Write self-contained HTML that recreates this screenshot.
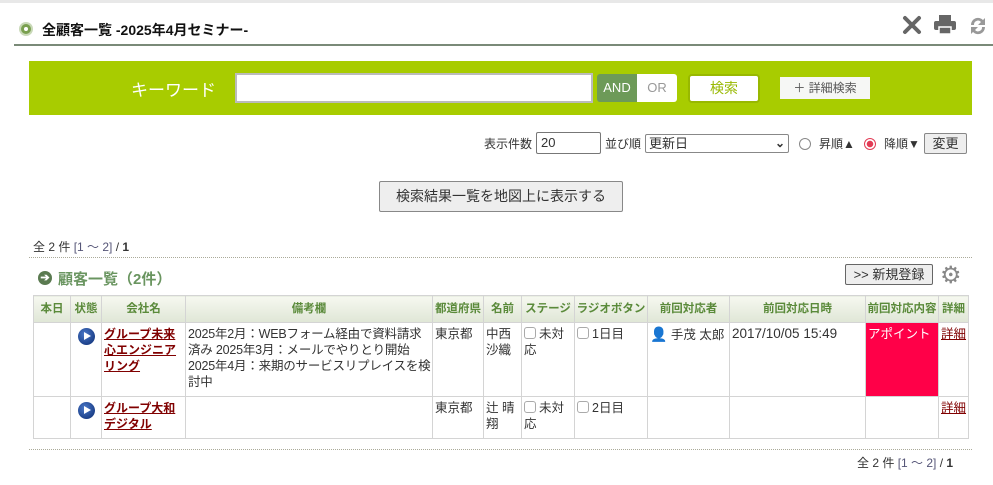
<!DOCTYPE html>
<html><head><meta charset="utf-8"><style>
*{box-sizing:border-box;margin:0;padding:0}
body{width:993px;height:485px;background:#fff;font-family:"Liberation Sans","Noto Sans CJK JP",sans-serif;font-size:12px;color:#333;position:relative;overflow:hidden}
.a{position:absolute}
table{border-collapse:collapse;position:absolute;left:33px;top:295px;width:935px;table-layout:fixed}
td,th{border:1px solid #d4d4d4;vertical-align:top;padding:3px 2px;font-size:12.5px;line-height:16px}
th{background:linear-gradient(#f6f8f0,#dfe6d6);color:#5a8a3a;font-weight:bold;text-align:center;height:27px;vertical-align:middle;padding:0 1px;white-space:nowrap;font-size:11.5px}
td a{color:#800000;font-weight:bold;text-decoration:underline}
.cb{display:inline-block;width:12px;height:12px;border:1px solid #aaa;border-radius:3px;vertical-align:-1px;margin-right:3px}
.play{display:inline-block;width:17px;height:17px;border-radius:50%;background:radial-gradient(circle at 40% 35%,#4a78c8,#0a2a70);position:relative;margin-top:2px}
.play:after{content:"";position:absolute;left:6px;top:4px;border-left:7px solid #fff;border-top:4.5px solid transparent;border-bottom:4.5px solid transparent}
</style></head><body>
<div class="a" style="left:0;top:0;width:993px;height:3px;background:#e8e8e8"></div>
<div class="a" style="left:19px;top:22px;width:14px;height:14px;border-radius:50%;background:#7aa050;border:2px solid #c9d9b8"></div>
<div class="a" style="left:24px;top:27px;width:4px;height:4px;border-radius:50%;background:#fff"></div>
<div class="a" style="left:42px;top:20px;font-size:14px;font-weight:bold;color:#111">全顧客一覧 -2025年4月セミナー-</div>
<svg class="a" style="left:902px;top:15px" width="20" height="20" viewBox="0 0 20 20"><path d="M3 3l14 14M17 3L3 17" stroke="#666" stroke-width="4" stroke-linecap="round"/></svg>
<svg class="a" style="left:934px;top:15px" width="22" height="20" viewBox="0 0 22 20"><rect x="5" y="0" width="12" height="6" fill="#666"/><rect x="0" y="6" width="22" height="9" rx="2" fill="#666"/><rect x="5" y="12" width="12" height="7" fill="#666" stroke="#fff" stroke-width="1.5"/></svg>
<svg class="a" style="left:968px;top:15px" width="20" height="22" viewBox="0 0 20 22"><path d="M3 10a7 7 0 0 1 12-5l2-2v7h-7l3-3a4 4 0 0 0-7 3z M17 12a7 7 0 0 1-12 5l-2 2v-7h7l-3 3a4 4 0 0 0 7-3z" fill="#999"/></svg>
<div class="a" style="left:14px;top:44px;width:979px;height:2px;background:#7a8a78"></div>
<div class="a" style="left:29px;top:61px;width:943px;height:54px;background:#a8cc00"></div>
<div class="a" style="left:131px;top:76px;font-size:17px;color:#fff">キーワード</div>
<div class="a" style="left:235px;top:73px;width:358px;height:30px;background:#fff;border:2px solid #bbb"></div>
<div class="a" style="left:597px;top:74px;width:40px;height:28px;background:#6d9a58;color:#fff;font-size:13px;text-align:center;line-height:28px;border-radius:3px 0 0 3px">AND</div>
<div class="a" style="left:637px;top:74px;width:40px;height:28px;background:#fff;color:#999;font-size:13px;text-align:center;line-height:28px;border-radius:0 3px 3px 0">OR</div>
<div class="a" style="left:688px;top:74px;width:72px;height:29px;background:#fff;border:2px solid #98b800;border-radius:4px;color:#98b800;font-size:14px;text-align:center;line-height:25px">検索</div>
<div class="a" style="left:780px;top:77px;width:90px;height:22px;background:#f6f7f5;color:#555;font-size:12px;text-align:center;line-height:22px">＋ 詳細検索</div>
<div class="a" style="left:484px;top:135px;font-size:12px">表示件数</div>
<div class="a" style="left:536px;top:132px;width:65px;height:22px;border:1px solid #777;border-radius:2px;padding:2px 4px;font-size:13px">20</div>
<div class="a" style="left:605px;top:135px">並び順</div>
<div class="a" style="left:645px;top:134px;width:144px;height:19px;border:1px solid #888;border-radius:2px;padding:0 3px;font-size:13px;line-height:17px">更新日<span style="float:right;font-size:12px;font-weight:bold">&#8964;</span></div>
<div class="a" style="left:799px;top:138px;width:12px;height:12px;border-radius:50%;border:1px solid #888"></div>
<div class="a" style="left:819px;top:135px">昇順▲</div>
<div class="a" style="left:864px;top:138px;width:12px;height:12px;border-radius:50%;border:1.5px solid #e23a54;background:radial-gradient(#e23a54 3px,#fff 3.5px)"></div>
<div class="a" style="left:884px;top:135px">降順▼</div>
<div class="a" style="left:924px;top:133px;width:43px;height:21px;border:1px solid #888;border-radius:2px;background:#eee;text-align:center;line-height:19px;font-size:13px">変更</div>
<div class="a" style="left:379px;top:181px;width:244px;height:31px;border:1px solid #888;border-radius:2px;background:#eee;text-align:center;line-height:29px;font-size:14px">検索結果一覧を地図上に表示する</div>
<div class="a" style="left:33px;top:238px">全 2 件 <span style="color:#557">[1 ～ 2]</span> / <b>1</b></div>
<div class="a" style="left:29px;top:257px;width:943px;border-top:1px dotted #aa9"></div>
<div class="a" style="left:38px;top:271px;width:14px;height:14px;border-radius:50%;background:#5a7a50;color:#fff;font-size:11px;line-height:14px;text-align:center;font-weight:bold">➔</div>
<div class="a" style="left:58px;top:268px;font-size:15px;font-weight:bold;color:#6a9560">顧客一覧（2件）</div>
<div class="a" style="left:845px;top:264px;width:88px;height:21px;border:1px solid #666;border-radius:2px;background:#eee;text-align:center;line-height:19px;font-size:13px">&gt;&gt; 新規登録</div>
<div class="a" style="left:940px;top:263px;font-size:24px;color:#888;line-height:26px">⚙</div>
<table>
<colgroup><col style="width:37px"><col style="width:31px"><col style="width:84px"><col style="width:247px"><col style="width:51px"><col style="width:38px"><col style="width:53px"><col style="width:73px"><col style="width:82px"><col style="width:136px"><col style="width:73px"><col style="width:30px"></colgroup>
<tr><th>本日</th><th>状態</th><th>会社名</th><th>備考欄</th><th>都道府県</th><th>名前</th><th>ステージ</th><th>ラジオボタン</th><th>前回対応者</th><th>前回対応日時</th><th>前回対応内容</th><th>詳細</th></tr>
<tr style="height:74px"><td></td><td style="text-align:center"><span class="play"></span></td><td style="font-size:12px"><a>グループ未来心エンジニアリング</a></td><td style="white-space:nowrap;overflow:hidden;letter-spacing:-0.2px">2025年2月：WEBフォーム経由で資料請求<br>済み 2025年3月：メールでやりとり開始<br>2025年4月：来期のサービスリプレイスを検<br>討中</td><td>東京都</td><td>中西沙織</td><td><span class="cb"></span>未対応</td><td><span class="cb"></span>1日目</td><td style="white-space:nowrap"><span style="color:#b08050;font-size:14px">👤</span> 手茂 太郎</td><td style="font-size:13.5px">2017/10/05 15:49</td><td style="background:#ff0048;color:#fff">アポイント</td><td><a style="font-weight:normal">詳細</a></td></tr>
<tr style="height:42px"><td></td><td style="text-align:center"><span class="play"></span></td><td style="font-size:12px"><a>グループ大和デジタル</a></td><td></td><td>東京都</td><td>辻 晴翔</td><td><span class="cb"></span>未対応</td><td><span class="cb"></span>2日目</td><td></td><td></td><td></td><td><a style="font-weight:normal">詳細</a></td></tr>
</table>
<div class="a" style="left:29px;top:449px;width:943px;border-top:1px dotted #aa9"></div>
<div class="a" style="left:857px;top:454px">全 2 件 <span style="color:#557">[1 ～ 2]</span> / <b>1</b></div>
</body></html>
